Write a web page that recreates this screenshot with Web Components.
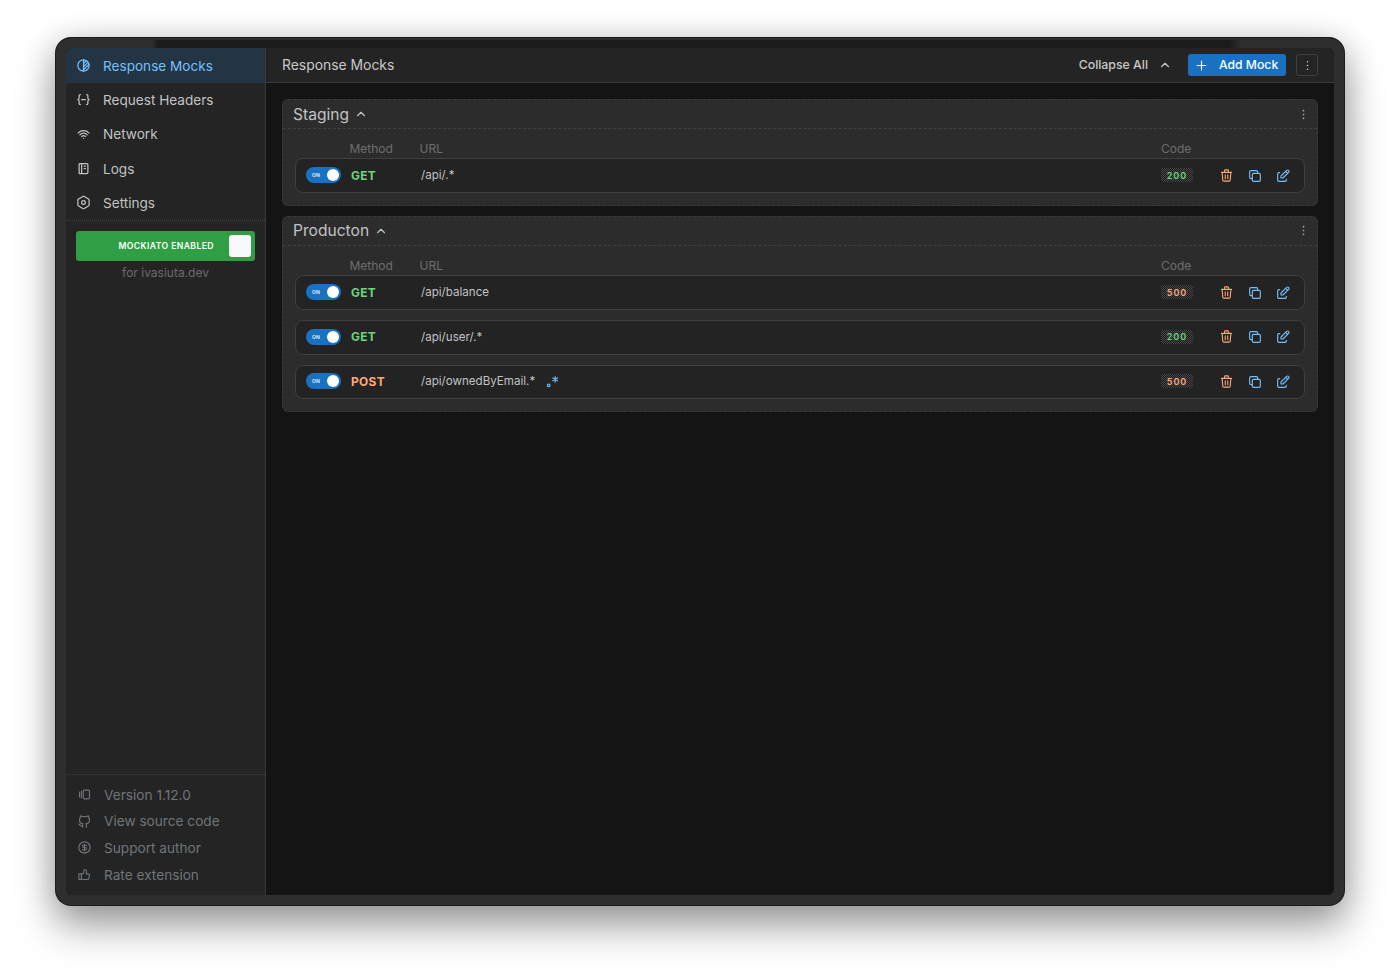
<!DOCTYPE html>
<html lang="en">
<head>
<meta charset="utf-8">
<title>Mockiato</title>
<style>
	html, body { margin: 0; height: 100%; background: #fff; overflow: hidden; }
	body { font-family: Inter, "Liberation Sans", sans-serif; }
</style>
</head>
<body>
<app-window>
	<side-bar slot="side">
		<nav-item icon="half" active>Response Mocks</nav-item>
		<nav-item icon="braces">Request Headers</nav-item>
		<nav-item icon="wifi">Network</nav-item>
		<nav-item icon="notebook">Logs</nav-item>
		<nav-item icon="settings">Settings</nav-item>
		<foot-link slot="foot" icon="versions">Version 1.12.0</foot-link>
		<foot-link slot="foot" icon="github">View source code</foot-link>
		<foot-link slot="foot" icon="coin">Support author</foot-link>
		<foot-link slot="foot" icon="thumb">Rate extension</foot-link>
	</side-bar>
	<top-bar slot="top">Response Mocks</top-bar>
	<mock-group name="Staging">
		<mock-row method="GET" url="/api/.*" code="200"></mock-row>
	</mock-group>
	<mock-group name="Producton">
		<mock-row method="GET" url="/api/balance" code="500"></mock-row>
		<mock-row method="GET" url="/api/user/.*" code="200"></mock-row>
		<mock-row method="POST" url="/api/ownedByEmail.*" code="500" regex></mock-row>
	</mock-group>
</app-window>

<script>
(function () {
	const paths = {
		half: '<circle cx="12" cy="12" r="9"/><path d="M12 3v18M12 14l7-7M12 19l8.5-8.5M12 9l4.5-4.5"/>',
		braces: '<path d="M7 4a2 2 0 0 0-2 2v3a2 3 0 0 1-2 3a2 3 0 0 1 2 3v3a2 2 0 0 0 2 2M17 4a2 2 0 0 1 2 2v3a2 3 0 0 0 2 3a2 3 0 0 0-2 3v3a2 2 0 0 1-2 2M9 12h6"/>',
		wifi: '<path d="M12 18h.01M9.172 15.172a4 4 0 0 1 5.656 0M6.343 12.343a8 8 0 0 1 11.314 0M3.515 9.515c4.686-4.687 12.284-4.687 17 0"/>',
		notebook: '<path d="M6 4h11a2 2 0 0 1 2 2v12a2 2 0 0 1-2 2h-11a1 1 0 0 1-1-1v-14a1 1 0 0 1 1-1m3 0v16M13 8h2M13 12h2"/>',
		settings: '<path d="M19.875 6.27a2.225 2.225 0 0 1 1.125 1.948v7.284c0 .809-.443 1.555-1.158 1.948l-6.75 4.27a2.269 2.269 0 0 1-2.184 0l-6.75-4.27a2.225 2.225 0 0 1-1.158-1.948v-7.285c0-.809.443-1.554 1.158-1.947l6.75-3.98a2.33 2.33 0 0 1 2.25 0l6.75 3.98h-.033z"/><circle cx="12" cy="12" r="3"/>',
		versions: '<path d="M10 7a2 2 0 0 1 2-2h6a2 2 0 0 1 2 2v10a2 2 0 0 1-2 2h-6a2 2 0 0 1-2-2zM7 7v10M4 8v8"/>',
		github: '<path d="M9 19c-4.3 1.4-4.3-2.5-6-3m12 5v-3.5c0-1 .1-1.4-.5-2c2.8-.3 5.5-1.4 5.5-6a4.6 4.6 0 0 0-1.3-3.2a4.2 4.2 0 0 0-.1-3.2s-1.1-.3-3.5 1.3a12.3 12.3 0 0 0-6.2 0c-2.4-1.6-3.5-1.3-3.5-1.3a4.2 4.2 0 0 0-.1 3.2a4.6 4.6 0 0 0-1.3 3.2c0 4.6 2.7 5.7 5.5 6c-.6 .6-.6 1.2-.5 2v3.5"/>',
		coin: '<circle cx="12" cy="12" r="9"/><path d="M14.8 9a2 2 0 0 0-1.8-1h-2a2 2 0 1 0 0 4h2a2 2 0 1 1 0 4h-2a2 2 0 0 1-1.8-1M12 7v10"/>',
		thumb: '<path d="M7 11v8a1 1 0 0 1-1 1h-2a1 1 0 0 1-1-1v-7a1 1 0 0 1 1-1h3a4 4 0 0 0 4-4v-1a2 2 0 0 1 4 0v5h3a2 2 0 0 1 2 2l-1 5a2 3 0 0 1-2 2h-7a3 3 0 0 1-3-3"/>',
		chevron: '<path d="M6 15l6-6 6 6"/>',
		plus: '<path d="M12 5v14M5 12h14"/>',
		dots: '<path d="M12 5h.01M12 12h.01M12 19h.01"/>',
		trash: '<path d="M4 7h16M10 11v6M14 11v6M5 7l1 12a2 2 0 0 0 2 2h8a2 2 0 0 0 2-2l1-12M9 7v-3a1 1 0 0 1 1-1h4a1 1 0 0 1 1 1v3"/>',
		copy: '<path d="M8 10a2 2 0 0 1 2-2h8a2 2 0 0 1 2 2v8a2 2 0 0 1-2 2h-8a2 2 0 0 1-2-2zM16 8v-2a2 2 0 0 0-2-2h-8a2 2 0 0 0-2 2v8a2 2 0 0 0 2 2h2"/>',
		edit: '<path d="M7 7h-1a2 2 0 0 0-2 2v9a2 2 0 0 0 2 2h9a2 2 0 0 0 2-2v-1M20.385 6.585a2.1 2.1 0 0 0-2.97-2.97l-8.415 8.385v3h3l8.385-8.415zM16 5l3 3"/>',
		regex: '<circle cx="5" cy="19" r="2.4"/><path d="M17 3v10M12.7 5.5l8.6 5M12.7 10.5l8.6-5"/>'
	};

	const icon = (name, size, width = 2) => `<svg width="${size}" height="${size}" viewBox="0 0 24 24" fill="none" stroke="currentColor" stroke-width="${width}" stroke-linecap="round" stroke-linejoin="round">${paths[name]}</svg>`;

	class AppWindow extends HTMLElement {
		constructor() {
			super();
			this.attachShadow({ mode: 'open' }).innerHTML = `
			<style>
				:host { display: block; box-sizing: border-box; height: 979px; padding: 37px 55px 73px; }
				.frame {
					box-sizing: border-box; height: 869px; padding: 11px;
					display: flex; border-radius: 16px; background: #2e2e2e;
					background-image: linear-gradient(90deg, transparent 7.5%, #1b1b1b 8%, #1b1b1b 91%, transparent 92%);
					background-size: 100% 8px; background-position: 0 3px; background-repeat: no-repeat;
					box-shadow: inset 0 0 0 1px #1c1c1c, inset 0 1px 0 #000, 0 22px 40px rgba(0,0,0,.32), 0 4px 32px rgba(0,0,0,.2);
				}
				.inner { flex: 1; display: flex; min-width: 0; border-radius: 6px; overflow: hidden; background: #141414; }
				.main { flex: 1; min-width: 0; display: flex; flex-direction: column; }
				.content { padding: 16px 16px 0; display: flex; flex-direction: column; gap: 10px; }
			</style>
			<div class="frame"><div class="inner">
				<slot name="side"></slot>
				<div class="main">
					<slot name="top"></slot>
					<div class="content"><slot></slot></div>
				</div>
			</div></div>`;
		}
	}

	class SideBar extends HTMLElement {
		constructor() {
			super();
			this.attachShadow({ mode: 'open' }).innerHTML = `
			<style>
				:host { display: flex; flex-direction: column; box-sizing: border-box; width: 200px; flex: none; background: #242424; border-right: 1px solid #3a3a3a; }
				nav { display: flex; flex-direction: column; padding-top: .4px; }
				.enable { border-top: 1px dotted #444; padding: 10px 10px 0; text-align: center; }
				.btn { height: 30px; border-radius: 3px; background: #2f9e44; display: flex; align-items: center; justify-content: flex-end; padding-right: 4px; gap: 15px; color: #fff; font-size: 8.6px; font-weight: 600; letter-spacing: .42px; }
				.knob { width: 22px; height: 22px; border-radius: 3px; background: #f8f9fa; }
				.for { margin-top: 4px; font-size: 12px; line-height: 15px; color: #6b6b6b; }
				.foot { margin-top: auto; border-top: 1px dotted #444; padding: 6px 0 7.2px; display: flex; flex-direction: column; }
			</style>
			<nav><slot></slot></nav>
			<div class="enable">
				<div class="btn"><span>MOCKIATO ENABLED</span><span class="knob"></span></div>
				<div class="for">for ivasiuta.dev</div>
			</div>
			<div class="foot"><slot name="foot"></slot></div>`;
		}
	}

	class NavItem extends HTMLElement {
		constructor() {
			super();
			this.attachShadow({ mode: 'open' }).innerHTML = `
			<style>
				:host { display: flex; align-items: center; gap: 12px; height: 34.35px; padding-left: 10px; font-size: 13.6px; color: #c1c2c5; }
				:host([active]) { background: #233444; color: #74c0fc; }
				svg { display: block; }
			</style>
			${icon(this.getAttribute('icon'), 15, 2)}<slot></slot>`;
		}
	}

	class FootLink extends HTMLElement {
		constructor() {
			super();
			this.attachShadow({ mode: 'open' }).innerHTML = `
			<style>
				:host { display: flex; align-items: center; gap: 12px; height: 26.6px; padding-left: 11px; font-size: 13.65px; color: #70757a; }
				svg { display: block; }
			</style>
			${icon(this.getAttribute('icon'), 15, 1.8)}<slot></slot>`;
		}
	}

	class TopBar extends HTMLElement {
		constructor() {
			super();
			this.attachShadow({ mode: 'open' }).innerHTML = `
			<style>
				:host { display: flex; align-items: center; box-sizing: border-box; height: 35px; padding: 0 16px; background: #242424; border-bottom: 1px solid #3a3a3a; font-size: 13.9px; color: #c9c9c9; }
				.title { flex: 1; padding-bottom: 1px; }
				.collapse { display: flex; align-items: center; gap: 10px; font-size: 12.3px; font-weight: 500; color: #c9c9c9; margin-right: 16px; padding-bottom: 1px; }
				.add { display: flex; align-items: center; gap: 10px; box-sizing: border-box; width: 98px; height: 22px; padding-left: 6px; border-radius: 3px; background: #1971c2; color: #fff; font-size: 12.2px; font-weight: 500; }
				.add b { font-weight: inherit; padding-bottom: 1px; }
				.menu { display: flex; align-items: center; justify-content: center; box-sizing: border-box; width: 22px; height: 22px; margin-left: 10px; border: 1px solid #3f3f3f; border-radius: 3px; color: #c9c9c9; }
				svg { display: block; }
			</style>
			<span class="title"><slot></slot></span>
			<span class="collapse">Collapse All ${icon('chevron', 14, 2)}</span>
			<span class="add">${icon('plus', 15, 1.8)}<b>Add Mock</b></span>
			<span class="menu">${icon('dots', 13, 3)}</span>`;
		}
	}

	class MockGroup extends HTMLElement {
		constructor() {
			super();
			this.attachShadow({ mode: 'open' }).innerHTML = `
			<style>
				:host { display: block; background: #2c2c2c; border: 1px dashed #3a3a3a; border-radius: 6px; }
				.head { display: flex; align-items: center; gap: 5px; height: 28px; padding: 0 7px 0 10px; border-bottom: 1px dashed #424242; font-size: 15.6px; color: #c1c2c5; }
				.dots { margin-left: auto; color: #a5a5a5; }
				.labels { display: flex; align-items: flex-end; height: 29.33px; box-sizing: border-box; padding: 0 124px 2px 66.5px; font-size: 12px; line-height: 15px; color: #6e6e6e; }
				.labels span:nth-child(1) { width: 70px; }
				.labels span:nth-child(2) { flex: 1; }
				.labels span:nth-child(3) { width: 32px; }
				.rows { display: flex; flex-direction: column; gap: 10px; padding: 0 12px 12px; }
				svg { display: block; }
			</style>
			<div class="head"><span>${this.getAttribute('name')}</span>${icon('chevron', 14, 2)}<span class="dots">${icon('dots', 13, 3.2)}</span></div>
			<div class="labels"><span>Method</span><span>URL</span><span>Code</span></div>
			<div class="rows"><slot></slot></div>`;
		}
	}

	class MockRow extends HTMLElement {
		constructor() {
			super();
			const method = this.getAttribute('method');
			const code = this.getAttribute('code');
			const regex = this.hasAttribute('regex') ? `<span class="regex">${icon('regex', 13, 2.2)}</span>` : '';
			this.attachShadow({ mode: 'open' }).innerHTML = `
			<style>
				:host { display: flex; align-items: center; box-sizing: border-box; height: 34.67px; padding: 0 13px 1px 10px; background: #232323; border: 1px solid #3f3f3f; border-radius: 8px; }
				.toggle { flex: none; box-sizing: border-box; display: flex; align-items: center; justify-content: space-between; width: 35px; height: 16px; padding: 0 2px 0 6px; border-radius: 8px; background: #1971c2; color: #dbe9f6; font-size: 5px; font-weight: 700; letter-spacing: .2px; margin-right: 10px; }
				.toggle i { width: 12px; height: 12px; border-radius: 50%; background: #fff; }
				.method { flex: none; width: 70px; font-size: 11.9px; font-weight: 700; letter-spacing: .35px; color: ${method === 'GET' ? '#69d57d' : '#ffa87a'}; }
				.url { flex: 1; display: flex; align-items: center; font-size: 11.6px; color: #c1c2c5; }
				.regex { margin-left: 11px; color: #74c0fc; }
				.code { flex: none; display: flex; align-items: center; justify-content: center; box-sizing: border-box; width: 32px; height: 14px; border-radius: 3px; margin-right: 26px; background: repeating-conic-gradient(#474747 0 25%, #1c1c1c 0 50%) 0 0 / 2px 2px; font-size: 9px; font-weight: 600; letter-spacing: 1px; color: ${code === '200' ? '#69d57d' : '#ffa87a'}; }
				.actions { flex: none; display: flex; gap: 12.5px; padding-top: 1px; }
				.trash { color: #ffa87a; }
				.blue { color: #74c0fc; }
				svg { display: block; }
			</style>
			<span class="toggle">ON<i></i></span>
			<span class="method">${method}</span>
			<span class="url">${this.getAttribute('url')}${regex}</span>
			<span class="code">${code}</span>
			<span class="actions">
				<span class="trash">${icon('trash', 15, 1.7)}</span>
				<span class="blue">${icon('copy', 16, 1.7)}</span>
				<span class="blue">${icon('edit', 16, 1.7)}</span>
			</span>`;
		}
	}

	window.customElements.define('app-window', AppWindow);
	window.customElements.define('side-bar', SideBar);
	window.customElements.define('nav-item', NavItem);
	window.customElements.define('foot-link', FootLink);
	window.customElements.define('top-bar', TopBar);
	window.customElements.define('mock-group', MockGroup);
	window.customElements.define('mock-row', MockRow);
})();
</script>
</body>
</html>
